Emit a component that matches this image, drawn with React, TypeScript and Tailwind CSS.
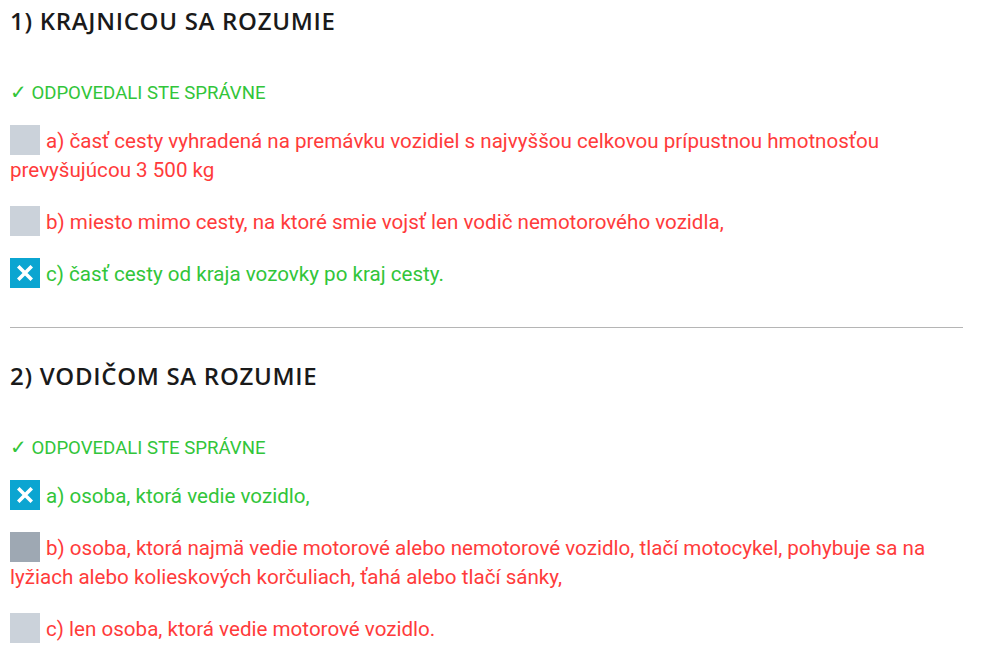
import React from "react";

type Option = { label: string; text: string; state: "none" | "checked" | "dark"; correct: boolean };
type Question = { title: string; options: Option[] };

const questions: Question[] = [
  {
    title: "1) KRAJNICOU SA ROZUMIE",
    options: [
      {
        label: "a)",
        text: "časť cesty vyhradená na premávku vozidiel s najvyššou celkovou prípustnou hmotnosťou prevyšujúcou 3 500 kg",
        state: "none",
        correct: false,
      },
      {
        label: "b)",
        text: "miesto mimo cesty, na ktoré smie vojsť len vodič nemotorového vozidla,",
        state: "none",
        correct: false,
      },
      { label: "c)", text: "časť cesty od kraja vozovky po kraj cesty.", state: "checked", correct: true },
    ],
  },
  {
    title: "2) VODIČOM SA ROZUMIE",
    options: [
      { label: "a)", text: "osoba, ktorá vedie vozidlo,", state: "checked", correct: true },
      {
        label: "b)",
        text: "osoba, ktorá najmä vedie motorové alebo nemotorové vozidlo, tlačí motocykel, pohybuje sa na lyžiach alebo kolieskových korčuliach, ťahá alebo tlačí sánky,",
        state: "dark",
        correct: false,
      },
      { label: "c)", text: "len osoba, ktorá vedie motorové vozidlo.", state: "none", correct: false },
    ],
  },
];

// square "checkbox" sitting in the first text line
const Box = ({ state }: { state: Option["state"] }) => (
  <span
    className={
      "inline-block overflow-hidden w-[30px] h-[30px] -mt-[8px] align-[-7px] mr-[6px] " +
      (state === "checked" ? "bg-[#0ba5d1]" : state === "dark" ? "bg-[#9ea8b3]" : "bg-[#cbd2da]")
    }
  >
    {state === "checked" && (
      <svg width="16" height="16" viewBox="0 0 16 16" className="block m-[7px]">
        <path d="M2.5 2.5 L13.5 13.5 M13.5 2.5 L2.5 13.5" stroke="#fff" strokeWidth="3.6" strokeLinecap="square" />
      </svg>
    )}
  </span>
);

export default function App() {
  return (
    <div className="bg-white min-h-screen px-[10px] pt-[5px] w-[973px]" style={{ fontFamily: "Roboto, sans-serif" }}>
      {questions.map((q, i) => (
        <div key={i}>
          {i > 0 && <hr className="border-0 border-t border-[#b5b5b5] mt-[38px] mb-[32px]" />}
          <h2
            className="text-[24px] font-semibold tracking-[0.7px] text-[#1a1a1a] leading-[32px]"
            style={{ fontFamily: "'Open Sans', sans-serif" }}
          >
            {q.title}
          </h2>
          <p className="text-[18.6px] text-[#32c53a] mt-[44px] h-[24px] leading-[24px]">
            <span className="text-[20px] leading-none" style={{ fontFamily: "'Noto Sans', 'DejaVu Sans', sans-serif" }}>
              ✓
            </span>{" "}
            ODPOVEDALI STE SPRÁVNE
          </p>
          <div className="mt-[22px] flex flex-col gap-[23px]">
            {q.options.map((o, j) => (
              <p
                key={j}
                className={"text-[20.6px] leading-[29px] " + (o.correct ? "text-[#32c53a]" : "text-[#ff3b3b]")}
              >
                <Box state={o.state} />
                {o.label} {o.text}
              </p>
            ))}
          </div>
        </div>
      ))}
    </div>
  );
}
